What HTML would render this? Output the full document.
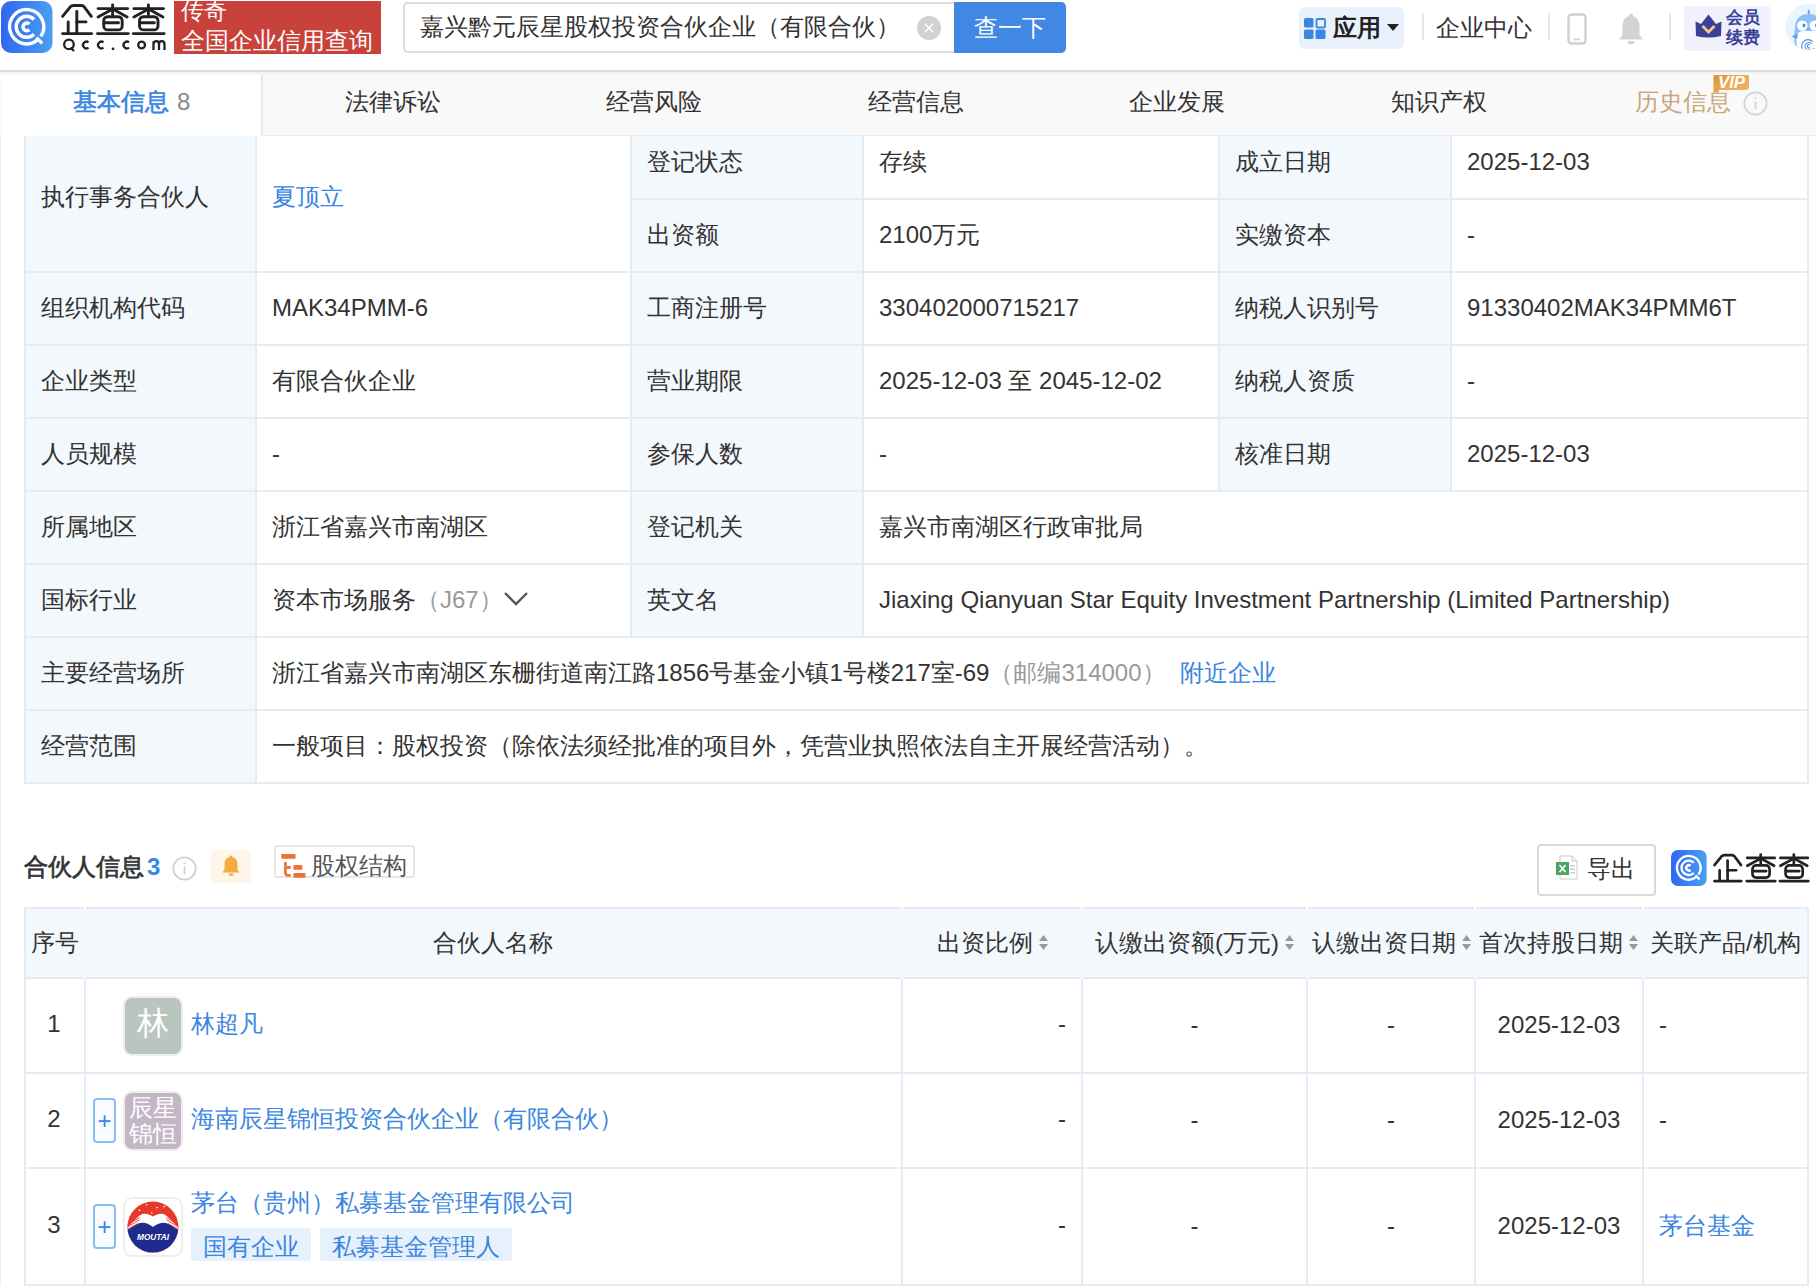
<!DOCTYPE html>
<html><head><meta charset="utf-8"><title>企查查</title><style>
*{box-sizing:border-box;margin:0;padding:0}
html,body{width:1816px;height:1286px;overflow:hidden;background:#fff;font-family:"Liberation Sans", sans-serif;color:#333}
.a{position:absolute}
.c{position:absolute;display:flex;align-items:center;padding-left:15px;padding-bottom:2px;font-size:24px;white-space:nowrap}
.lb{background:#f3f8fd}
.hl{position:absolute;height:2px;background:#e3ebf5}
.vl{position:absolute;width:2px;background:#e3ebf5}
.lk{color:#3a86e0}
.gr{color:#999}
</style></head>
<body>
<div class="a" style="left:0;top:70px;width:1px;height:1216px;background:#eeeeee"></div>
<div class="c lb" style="left:26px;top:127px;width:229px;height:144px;padding-bottom:5px">执行事务合伙人</div>
<div class="c" style="left:257px;top:127px;width:373px;height:144px;padding-bottom:5px"><span class="lk">夏顶立</span></div>
<div class="c lb" style="left:632px;top:127px;width:230px;height:71px;">登记状态</div>
<div class="c" style="left:864px;top:127px;width:354px;height:71px;">存续</div>
<div class="c lb" style="left:1220px;top:127px;width:230px;height:71px;">成立日期</div>
<div class="c" style="left:1452px;top:127px;width:355px;height:71px;">2025-12-03</div>
<div class="c lb" style="left:632px;top:200px;width:230px;height:71px;">出资额</div>
<div class="c" style="left:864px;top:200px;width:354px;height:71px;">2100万元</div>
<div class="c lb" style="left:1220px;top:200px;width:230px;height:71px;">实缴资本</div>
<div class="c" style="left:1452px;top:200px;width:355px;height:71px;">-</div>
<div class="c lb" style="left:26px;top:273px;width:229px;height:71px;">组织机构代码</div>
<div class="c" style="left:257px;top:273px;width:373px;height:71px;">MAK34PMM-6</div>
<div class="c lb" style="left:632px;top:273px;width:230px;height:71px;">工商注册号</div>
<div class="c" style="left:864px;top:273px;width:354px;height:71px;">330402000715217</div>
<div class="c lb" style="left:1220px;top:273px;width:230px;height:71px;">纳税人识别号</div>
<div class="c" style="left:1452px;top:273px;width:355px;height:71px;">91330402MAK34PMM6T</div>
<div class="c lb" style="left:26px;top:346px;width:229px;height:71px;">企业类型</div>
<div class="c" style="left:257px;top:346px;width:373px;height:71px;">有限合伙企业</div>
<div class="c lb" style="left:632px;top:346px;width:230px;height:71px;">营业期限</div>
<div class="c" style="left:864px;top:346px;width:354px;height:71px;">2025-12-03 至 2045-12-02</div>
<div class="c lb" style="left:1220px;top:346px;width:230px;height:71px;">纳税人资质</div>
<div class="c" style="left:1452px;top:346px;width:355px;height:71px;">-</div>
<div class="c lb" style="left:26px;top:419px;width:229px;height:71px;">人员规模</div>
<div class="c" style="left:257px;top:419px;width:373px;height:71px;">-</div>
<div class="c lb" style="left:632px;top:419px;width:230px;height:71px;">参保人数</div>
<div class="c" style="left:864px;top:419px;width:354px;height:71px;">-</div>
<div class="c lb" style="left:1220px;top:419px;width:230px;height:71px;">核准日期</div>
<div class="c" style="left:1452px;top:419px;width:355px;height:71px;">2025-12-03</div>
<div class="c lb" style="left:26px;top:492px;width:229px;height:71px;">所属地区</div>
<div class="c" style="left:257px;top:492px;width:373px;height:71px;">浙江省嘉兴市南湖区</div>
<div class="c lb" style="left:632px;top:492px;width:230px;height:71px;">登记机关</div>
<div class="c" style="left:864px;top:492px;width:943px;height:71px;">嘉兴市南湖区行政审批局</div>
<div class="c lb" style="left:26px;top:565px;width:229px;height:71px;">国标行业</div>
<div class="c" style="left:257px;top:565px;width:373px;height:71px;">资本市场服务<span class="gr">（J67）</span><svg class="a" style="left:246px;top:26px" width="26" height="16" viewBox="0 0 26 16"><path d="M2 2 L13 13 L24 2" fill="none" stroke="#555" stroke-width="2.4"/></svg></div>
<div class="c lb" style="left:632px;top:565px;width:230px;height:71px;">英文名</div>
<div class="c" style="left:864px;top:565px;width:943px;height:71px;">Jiaxing Qianyuan Star Equity Investment Partnership (Limited Partnership)</div>
<div class="c lb" style="left:26px;top:638px;width:229px;height:71px;">主要经营场所</div>
<div class="c" style="left:257px;top:638px;width:1550px;height:71px;">浙江省嘉兴市南湖区东栅街道南江路1856号基金小镇1号楼217室-69<span class="gr">（邮编314000）</span><span class="lk" style="margin-left:14px">附近企业</span></div>
<div class="c lb" style="left:26px;top:711px;width:229px;height:71px;">经营范围</div>
<div class="c" style="left:257px;top:711px;width:1550px;height:71px;">一般项目：股权投资（除依法须经批准的项目外，凭营业执照依法自主开展经营活动）。</div>
<div class="hl" style="left:630px;top:198px;width:1179px"></div>
<div class="hl" style="left:24px;top:271px;width:1785px"></div>
<div class="hl" style="left:24px;top:344px;width:1785px"></div>
<div class="hl" style="left:24px;top:417px;width:1785px"></div>
<div class="hl" style="left:24px;top:490px;width:1785px"></div>
<div class="hl" style="left:24px;top:563px;width:1785px"></div>
<div class="hl" style="left:24px;top:636px;width:1785px"></div>
<div class="hl" style="left:24px;top:709px;width:1785px"></div>
<div class="hl" style="left:24px;top:782px;width:1785px"></div>
<div class="vl" style="left:24px;top:125px;height:659px"></div>
<div class="vl" style="left:1807px;top:125px;height:659px"></div>
<div class="vl" style="left:255px;top:125px;height:659px"></div>
<div class="vl" style="left:630px;top:125px;height:513px"></div>
<div class="vl" style="left:862px;top:125px;height:513px"></div>
<div class="vl" style="left:1218px;top:125px;height:367px"></div>
<div class="vl" style="left:1450px;top:125px;height:367px"></div>

<div class="a" style="left:24px;top:849px;font-size:24px;font-weight:normal;-webkit-text-stroke:0.7px #333;line-height:36px;color:#333">合伙人信息<span style="color:#3a86e0;-webkit-text-stroke:0;margin-left:3px;font-weight:bold">3</span></div>
<svg class="a" style="left:172px;top:856px" width="25" height="25" viewBox="0 0 25 25"><circle cx="12.5" cy="12.5" r="11.2" fill="none" stroke="#d2d2d2" stroke-width="1.8"/><rect x="11.6" y="10.5" width="1.8" height="8" fill="#d2d2d2"/><circle cx="12.5" cy="7.3" r="1.1" fill="#d2d2d2"/></svg>
<div class="a" style="left:211px;top:850px;width:40px;height:33px;background:#fff6e9;border-radius:3px"></div>
<svg class="a" style="left:220px;top:855px" width="22" height="22" viewBox="0 0 22 22"><path d="M11 2 C6.5 2 4.5 5.5 4.5 9 L4.5 14.5 L2.5 17.5 L19.5 17.5 L17.5 14.5 L17.5 9 C17.5 5.5 15.5 2 11 2Z" fill="#f2ad3c"/><circle cx="11" cy="1.8" r="1.4" fill="#f2ad3c"/><path d="M8.5 18.5 A2.5 2.5 0 0 0 13.5 18.5Z" fill="#f2ad3c"/></svg>
<div class="a" style="left:274px;top:845px;width:141px;height:33px;border:2px solid #e6e6e6;border-radius:3px"></div>
<svg class="a" style="left:276px;top:848px" width="36" height="34" viewBox="0 0 36 34"><g fill="#ec7238"><rect x="5.3" y="5.9" width="14.3" height="4.9" rx="1"/><rect x="10.8" y="18" width="4" height="2.9"/><rect x="17.4" y="17" width="9" height="4.8" rx="1"/><rect x="17.4" y="25.1" width="12.1" height="4.6" rx="1"/></g><path d="M9.45 13.9 V24.5 Q9.45 27.35 12.3 27.35 H14.8" fill="none" stroke="#ec7238" stroke-width="2.7"/></svg>
<div class="a" style="left:311px;top:848px;font-size:24px;line-height:36px;color:#555">股权结构</div>

<div class="a" style="left:1537px;top:844px;width:119px;height:52px;border:2px solid #d9d9d9;border-radius:4px;background:#fff"></div>
<svg class="a" style="left:1555px;top:855px" width="24" height="26" viewBox="0 0 24 26"><path d="M5 1 L17 1 L22 6 L22 24 L5 24Z" fill="#fff" stroke="#c8c8c8" stroke-width="1"/><path d="M17 1 L17 6 L22 6" fill="none" stroke="#c8c8c8" stroke-width="1"/><rect x="15" y="10" width="5" height="1.5" fill="#ccc"/><rect x="15" y="13.5" width="5" height="1.5" fill="#ccc"/><rect x="15" y="17" width="5" height="1.5" fill="#ccc"/><rect x="1" y="7" width="13" height="13" fill="#4aa564"/><path d="M4.5 10 L10.5 17 M10.5 10 L4.5 17" stroke="#fff" stroke-width="1.8"/></svg>
<div class="a" style="left:1587px;top:851px;font-size:24px;line-height:36px;color:#333">导出</div>

<svg class="a" style="left:1671px;top:850px" width="36" height="36" viewBox="1 1 52 52"><defs><linearGradient id="lg1671" x1="0" y1="0" x2="1" y2="0"><stop offset="0" stop-color="#2f66f4"/><stop offset="1" stop-color="#49a0f1"/></linearGradient></defs>
<rect x="1" y="1" width="51.5" height="52" rx="10" fill="url(#lg1671)"/>
<g fill="none" stroke="#fff" stroke-linecap="butt">
<path d="M37.6 39.9 A17.1 17.1 0 1 1 40.8 36.4" stroke-width="3.4"/>
<path d="M36.4 37.6 L42.2 43.4" stroke-width="3.4"/>
<path d="M34 34.2 A10.45 10.45 0 1 1 34 19.4" stroke-width="3.5"/>
<path d="M29.4 29.6 A3.8 3.8 0 1 1 29.4 24" stroke-width="3.6"/>
</g></svg>
<svg class="a" style="left:1710px;top:850px" width="104" height="37" viewBox="0 0 112 40"><g fill="none" stroke="#222" stroke-width="2.9" stroke-linecap="round" stroke-linejoin="round">
<path d="M4.6 16.3 L12.3 6.8 Q13.6 5.5 15.5 5.5 L23.5 5.5 Q25.2 5.5 26.2 6.8 L33.3 16.3"/><path d="M18.8 11.4 V32.4"/><path d="M18.8 21.9 H28"/><path d="M10.2 21.9 V32.4"/><path d="M4.6 33.6 H33.6"/>
<path d="M40.1 8.6 H69.7"/><path d="M54.6 4.9 V14.8"/><path d="M54.3 9.3 L40.1 17"/><path d="M55.2 9.3 L69.1 17"/><rect x="45.7" y="16.7" width="18.5" height="13.2" rx="4"/><path d="M46.3 22.8 H60.5"/><path d="M39.5 33.6 H70.3"/>
<path d="M75.9 8.6 H105.5"/><path d="M90.4 4.9 V14.8"/><path d="M90.1 9.3 L75.9 17"/><path d="M91 9.3 L104.9 17"/><rect x="81.5" y="16.7" width="18.5" height="13.2" rx="4"/><path d="M82.1 22.8 H96.3"/><path d="M75.3 33.6 H106.1"/>
</g></svg>
<div class="a lb" style="left:24px;top:907px;width:1785px;height:70px"></div>
<div class="a" style="left:31px;top:925px;font-size:24px;line-height:36px;white-space:nowrap">序号</div>
<div class="a" style="left:433px;top:925px;font-size:24px;line-height:36px;white-space:nowrap">合伙人名称</div>
<div class="a" style="left:937px;top:925px;font-size:24px;line-height:36px;white-space:nowrap">出资比例</div>
<svg class="a" style="left:1039px;top:935px" width="9" height="15" viewBox="0 0 9 15"><path d="M0 6 L4.5 0 L9 6Z M0 9 L4.5 15 L9 9Z" fill="#999"/></svg>
<div class="a" style="left:1095px;top:925px;font-size:24px;line-height:36px;white-space:nowrap">认缴出资额(万元)</div>
<svg class="a" style="left:1285px;top:935px" width="9" height="15" viewBox="0 0 9 15"><path d="M0 6 L4.5 0 L9 6Z M0 9 L4.5 15 L9 9Z" fill="#999"/></svg>
<div class="a" style="left:1312px;top:925px;font-size:24px;line-height:36px;white-space:nowrap">认缴出资日期</div>
<svg class="a" style="left:1462px;top:935px" width="9" height="15" viewBox="0 0 9 15"><path d="M0 6 L4.5 0 L9 6Z M0 9 L4.5 15 L9 9Z" fill="#999"/></svg>
<div class="a" style="left:1479px;top:925px;font-size:24px;line-height:36px;white-space:nowrap">首次持股日期</div>
<svg class="a" style="left:1629px;top:935px" width="9" height="15" viewBox="0 0 9 15"><path d="M0 6 L4.5 0 L9 6Z M0 9 L4.5 15 L9 9Z" fill="#999"/></svg>
<div class="a" style="left:1650px;top:925px;font-size:24px;line-height:36px;white-space:nowrap">关联产品/机构</div>
<div class="c" style="left:26px;top:979px;width:58px;height:93px;justify-content:center;padding-left:0px;padding-right:0px;padding-right:2px;padding-bottom:4px">1</div>
<div class="c" style="left:903px;top:979px;width:178px;height:93px;justify-content:flex-end;padding-left:0px;padding-right:15px;padding-bottom:4px">-</div>
<div class="c" style="left:1083px;top:979px;width:223px;height:93px;justify-content:center;padding-left:0px;padding-right:0px;">-</div>
<div class="c" style="left:1308px;top:979px;width:166px;height:93px;justify-content:center;padding-left:0px;padding-right:0px;">-</div>
<div class="c" style="left:1476px;top:979px;width:166px;height:93px;justify-content:center;padding-left:0px;padding-right:0px;">2025-12-03</div>
<div class="c" style="left:1644px;top:979px;width:163px;height:93px;justify-content:flex-start;padding-left:15px;padding-right:0px;">-</div>
<div class="c" style="left:26px;top:1074px;width:58px;height:93px;justify-content:center;padding-left:0px;padding-right:0px;padding-right:2px;padding-bottom:4px">2</div>
<div class="c" style="left:903px;top:1074px;width:178px;height:93px;justify-content:flex-end;padding-left:0px;padding-right:15px;padding-bottom:4px">-</div>
<div class="c" style="left:1083px;top:1074px;width:223px;height:93px;justify-content:center;padding-left:0px;padding-right:0px;">-</div>
<div class="c" style="left:1308px;top:1074px;width:166px;height:93px;justify-content:center;padding-left:0px;padding-right:0px;">-</div>
<div class="c" style="left:1476px;top:1074px;width:166px;height:93px;justify-content:center;padding-left:0px;padding-right:0px;">2025-12-03</div>
<div class="c" style="left:1644px;top:1074px;width:163px;height:93px;justify-content:flex-start;padding-left:15px;padding-right:0px;">-</div>
<div class="c" style="left:26px;top:1169px;width:58px;height:115px;justify-content:center;padding-left:0px;padding-right:0px;padding-right:2px;padding-bottom:4px">3</div>
<div class="c" style="left:903px;top:1169px;width:178px;height:115px;justify-content:flex-end;padding-left:0px;padding-right:15px;padding-bottom:4px">-</div>
<div class="c" style="left:1083px;top:1169px;width:223px;height:115px;justify-content:center;padding-left:0px;padding-right:0px;">-</div>
<div class="c" style="left:1308px;top:1169px;width:166px;height:115px;justify-content:center;padding-left:0px;padding-right:0px;">-</div>
<div class="c" style="left:1476px;top:1169px;width:166px;height:115px;justify-content:center;padding-left:0px;padding-right:0px;">2025-12-03</div>
<div class="c" style="left:1644px;top:1169px;width:163px;height:115px;justify-content:flex-start;padding-left:15px;padding-right:0px;"><span class="lk">茅台基金</span></div>
<div class="a" style="left:123px;top:996px;width:60px;height:60px;border:2px solid #eee;border-radius:9px;background:#b9c6bf;color:#fff;font-size:32px;padding-bottom:4px;display:flex;align-items:center;justify-content:center">林</div>
<div class="a lk" style="left:191px;top:1006px;font-size:24px;line-height:36px">林超凡</div>
<div class="a" style="left:93px;top:1098px;width:23px;height:45px;border:2px solid #8bbcf2;border-radius:4px;background:#f8fbff;color:#3a86e0;font-size:24px;display:flex;align-items:center;justify-content:center;line-height:1">+</div>
<div class="a" style="left:123px;top:1091px;width:60px;height:60px;border:2px solid #eee;border-radius:9px;background:#c4b6c6;color:#fff;font-size:24px;line-height:26px;display:flex;align-items:center;justify-content:center;text-align:center">辰星<br>锦恒</div>
<div class="a lk" style="left:191px;top:1101px;font-size:24px;line-height:36px">海南辰星锦恒投资合伙企业（有限合伙）</div>
<div class="a" style="left:93px;top:1204px;width:23px;height:45px;border:2px solid #8bbcf2;border-radius:4px;background:#f8fbff;color:#3a86e0;font-size:24px;display:flex;align-items:center;justify-content:center;line-height:1">+</div>
<div class="a" style="left:123px;top:1197px;width:60px;height:60px;border:2px solid #eee;border-radius:9px;background:#fff;display:flex;align-items:center;justify-content:center"><svg width="56" height="56" viewBox="2 2 56 56"><defs><clipPath id="mc"><circle cx="29.9" cy="30.1" r="25.5"/></clipPath></defs>
<g clip-path="url(#mc)"><rect x="0" y="0" width="60" height="60" fill="#e7382b"/>
<path d="M0 31 L4.7 30.4 C10 25 15 19 19.1 17 C24 16 27 18 29.9 19.6 C33 18 36 16 40.6 17 C45 19 50 25 55 30.4 L60 31 L60 60 L0 60 Z" fill="#fff"/>
<g stroke="#e7382b" stroke-width="0.9" fill="none"><path d="M2 29 L17 20.5"/><path d="M2 31.3 L16.5 23"/><path d="M2 33.6 L15 26.5"/><path d="M58 29 L43 20.5"/><path d="M58 31.3 L43.5 23"/><path d="M58 33.6 L45 26.5"/></g>
<path d="M0 33.5 L4.2 32.9 C10 30 14 26 19.1 25.7 C24 25.5 27 28 29.9 29.9 C33 28 36 25.5 40.6 25.7 C46 26 50 30 55.5 32.9 L60 33.5 L60 60 L0 60Z" fill="#1e2a8e"/>
<g fill="#fff"><circle cx="23.7" cy="7.8" r="0.8"/><circle cx="16.5" cy="13.4" r="0.8"/><circle cx="28.8" cy="16" r="0.8"/><circle cx="34" cy="10.6" r="0.8"/><circle cx="41.1" cy="9.6" r="0.8"/></g>
</g><text x="30" y="42.6" font-size="8.3" font-weight="bold" font-style="italic" font-family="Liberation Sans" fill="#fff" text-anchor="middle" textLength="32" lengthAdjust="spacingAndGlyphs">MOUTAI</text></svg></div>
<div class="a lk" style="left:191px;top:1185px;font-size:24px;line-height:36px">茅台（贵州）私募基金管理有限公司</div>
<div class="a lk" style="left:191px;top:1228px;width:120px;height:33px;background:#e7f1fc;border-radius:3px;font-size:24px;line-height:38px;padding-left:12px">国有企业</div>
<div class="a lk" style="left:320px;top:1228px;width:192px;height:33px;background:#e7f1fc;border-radius:3px;font-size:24px;line-height:38px;padding-left:12px;overflow:hidden">私募基金管理人</div>
<div class="hl" style="left:24px;top:907px;width:1785px"></div>
<div class="hl" style="left:24px;top:977px;width:1785px"></div>
<div class="hl" style="left:24px;top:1072px;width:1785px"></div>
<div class="hl" style="left:24px;top:1167px;width:1785px"></div>
<div class="hl" style="left:24px;top:1284px;width:1785px"></div>
<div class="vl" style="left:24px;top:907px;height:379px"></div>
<div class="vl" style="left:1807px;top:907px;height:379px"></div>
<div class="vl" style="left:84px;top:977px;height:309px"></div>
<div class="a" style="left:84px;top:907px;width:2px;height:2px;background:#fff"></div>
<div class="a" style="left:84px;top:977px;width:2px;height:2px;background:#fff"></div>
<div class="vl" style="left:901px;top:977px;height:309px"></div>
<div class="a" style="left:901px;top:907px;width:2px;height:2px;background:#fff"></div>
<div class="a" style="left:901px;top:977px;width:2px;height:2px;background:#fff"></div>
<div class="vl" style="left:1081px;top:977px;height:309px"></div>
<div class="a" style="left:1081px;top:907px;width:2px;height:2px;background:#fff"></div>
<div class="a" style="left:1081px;top:977px;width:2px;height:2px;background:#fff"></div>
<div class="vl" style="left:1306px;top:977px;height:309px"></div>
<div class="a" style="left:1306px;top:907px;width:2px;height:2px;background:#fff"></div>
<div class="a" style="left:1306px;top:977px;width:2px;height:2px;background:#fff"></div>
<div class="vl" style="left:1474px;top:977px;height:309px"></div>
<div class="a" style="left:1474px;top:907px;width:2px;height:2px;background:#fff"></div>
<div class="a" style="left:1474px;top:977px;width:2px;height:2px;background:#fff"></div>
<div class="vl" style="left:1642px;top:977px;height:309px"></div>
<div class="a" style="left:1642px;top:907px;width:2px;height:2px;background:#fff"></div>
<div class="a" style="left:1642px;top:977px;width:2px;height:2px;background:#fff"></div>

<div class="a" style="left:0;top:71px;width:1816px;height:65px;background:#f9f9f9"></div>
<div class="a" style="left:0;top:135px;width:1816px;height:1px;background:#eaeaea"></div>
<div class="a" style="left:1px;top:71px;width:260px;height:65px;background:#fff;border-radius:6px 0 0 0"></div>
<div class="a" style="left:261px;top:71px;width:2px;height:64px;background:#e8e8e8"></div>
<div class="a" style="left:73px;top:84px;font-size:24px;-webkit-text-stroke:0.6px #3a86e0;line-height:36px;color:#3a86e0">基本信息<span style="-webkit-text-stroke:0;color:#888;margin-left:8px">8</span></div>
<div class="a" style="left:345px;top:84px;font-size:24px;line-height:36px;color:#333">法律诉讼</div>
<div class="a" style="left:606px;top:84px;font-size:24px;line-height:36px;color:#333">经营风险</div>
<div class="a" style="left:868px;top:84px;font-size:24px;line-height:36px;color:#333">经营信息</div>
<div class="a" style="left:1129px;top:84px;font-size:24px;line-height:36px;color:#333">企业发展</div>
<div class="a" style="left:1391px;top:84px;font-size:24px;line-height:36px;color:#333">知识产权</div>
<div class="a" style="left:1635px;top:84px;font-size:24px;line-height:36px;color:#c9a67c">历史信息</div>
<svg class="a" style="left:1712px;top:73px" width="38" height="20" viewBox="0 0 38 20"><defs><linearGradient id="vg" x1="0" y1="0" x2="1" y2="0.6"><stop offset="0" stop-color="#dc8f2c"/><stop offset="0.5" stop-color="#e9a84e"/><stop offset="1" stop-color="#eab265"/></linearGradient></defs><path d="M4 1 L34 1 Q37 1 37 4 L37 14 Q37 17 34 17 L8 17 L1.5 20 L1.5 4 Q1.5 1 4 1Z" fill="url(#vg)"/><text x="19.5" y="14.6" font-family="Liberation Sans" font-style="italic" font-weight="bold" font-size="16" fill="#fff" text-anchor="middle" textLength="27" lengthAdjust="spacingAndGlyphs">VIP</text></svg>
<svg class="a" style="left:1743px;top:91px" width="25" height="25" viewBox="0 0 25 25"><circle cx="12.5" cy="12.5" r="11.2" fill="none" stroke="#d5d5d5" stroke-width="1.8"/><rect x="11.6" y="10.5" width="1.8" height="8" fill="#d5d5d5"/><circle cx="12.5" cy="7.3" r="1.1" fill="#d5d5d5"/></svg>


<div class="a" style="left:0;top:0;width:1816px;height:70px;background:#fff"></div>
<svg class="a" style="left:1px;top:1px" width="52" height="52" viewBox="1 1 52 52"><defs><linearGradient id="lg1" x1="0" y1="0" x2="1" y2="0"><stop offset="0" stop-color="#2f66f4"/><stop offset="1" stop-color="#49a0f1"/></linearGradient></defs>
<rect x="1" y="1" width="51.5" height="52" rx="10" fill="url(#lg1)"/>
<g fill="none" stroke="#fff" stroke-linecap="butt">
<path d="M37.6 39.9 A17.1 17.1 0 1 1 40.8 36.4" stroke-width="3.4"/>
<path d="M36.4 37.6 L42.2 43.4" stroke-width="3.4"/>
<path d="M34 34.2 A10.45 10.45 0 1 1 34 19.4" stroke-width="3.5"/>
<path d="M29.4 29.6 A3.8 3.8 0 1 1 29.4 24" stroke-width="3.6"/>
</g></svg>
<svg class="a" style="left:58px;top:0px" width="112" height="40" viewBox="0 0 112 40"><g fill="none" stroke="#222" stroke-width="2.9" stroke-linecap="round" stroke-linejoin="round">
<path d="M4.6 16.3 L12.3 6.8 Q13.6 5.5 15.5 5.5 L23.5 5.5 Q25.2 5.5 26.2 6.8 L33.3 16.3"/><path d="M18.8 11.4 V32.4"/><path d="M18.8 21.9 H28"/><path d="M10.2 21.9 V32.4"/><path d="M4.6 33.6 H33.6"/>
<path d="M40.1 8.6 H69.7"/><path d="M54.6 4.9 V14.8"/><path d="M54.3 9.3 L40.1 17"/><path d="M55.2 9.3 L69.1 17"/><rect x="45.7" y="16.7" width="18.5" height="13.2" rx="4"/><path d="M46.3 22.8 H60.5"/><path d="M39.5 33.6 H70.3"/>
<path d="M75.9 8.6 H105.5"/><path d="M90.4 4.9 V14.8"/><path d="M90.1 9.3 L75.9 17"/><path d="M91 9.3 L104.9 17"/><rect x="81.5" y="16.7" width="18.5" height="13.2" rx="4"/><path d="M82.1 22.8 H96.3"/><path d="M75.3 33.6 H106.1"/>
</g></svg>
<svg class="a" style="left:58px;top:36px" width="112" height="17" viewBox="0 0 112 17"><g fill="none" stroke="#222" stroke-width="2.3">
<circle cx="10.95" cy="8.4" r="4.8"/><path d="M12.5 11.5 L16 15"/>
<path d="M30.5 6.3 A3.4 3.4 0 1 0 30.5 11.7"/>
<path d="M45.5 6.3 A3.4 3.4 0 1 0 45.5 11.7"/>
<path d="M71 6.3 A3.4 3.4 0 1 0 71 11.7"/>
<circle cx="83.6" cy="9" r="3.4"/>
<path d="M95.5 14 V5.2 M95.5 8.5 Q95.5 5.2 98.5 5.2 Q101 5.2 101 8.5 V14 M101 8.5 Q101 5.2 103.8 5.2 Q106.5 5.2 106.5 8.5 V14"/>
</g><circle cx="55" cy="12.8" r="1.4" fill="#222"/></svg>
<div class="a" style="left:174px;top:1px;width:207px;height:53px;background:#c8413b;overflow:hidden">
  <div class="a" style="left:7px;top:-4px;font-size:23px;line-height:28px;color:#fff">传奇</div>
  <div class="a" style="left:7px;top:25.5px;font-size:23.6px;line-height:28px;color:#fff;letter-spacing:0px">全国企业信用查询</div>
</div>
<div class="a" style="left:403px;top:2px;width:560px;height:51px;border:2px solid #dcdcdc;border-right:none;border-radius:5px 0 0 5px;background:#fff"></div>
<div class="a" style="left:420px;top:9px;font-size:24px;line-height:36px;color:#333">嘉兴黔元辰星股权投资合伙企业（有限合伙）</div>
<div class="a" style="left:917px;top:16px;width:24px;height:24px;border-radius:50%;background:#d2d2d2"></div>
<svg class="a" style="left:917px;top:16px" width="24" height="24" viewBox="0 0 24 24"><path d="M7.8 7.8 L16.2 16.2 M16.2 7.8 L7.8 16.2" stroke="#fff" stroke-width="1.5"/></svg>
<div class="a" style="left:954px;top:2px;width:112px;height:51px;background:#4088e3;border-radius:0 5px 5px 0;color:#fff;font-size:24px;display:flex;align-items:center;justify-content:center">查一下</div>

<div class="a" style="left:1299px;top:7px;width:105px;height:42px;background:#e9f1fd;border-radius:6px"></div>
<svg class="a" style="left:1304px;top:18px" width="22" height="21" viewBox="0 0 22 21"><rect x="0" y="0" width="9.5" height="9.5" rx="1.5" fill="#3a86e0"/><rect x="12.5" y="1" width="8.5" height="8.5" rx="1" fill="none" stroke="#3a86e0" stroke-width="1.8"/><rect x="0" y="11.5" width="9.5" height="9.5" rx="1.5" fill="#3a86e0"/><rect x="11.5" y="11.5" width="10" height="9.5" rx="1.5" fill="#3a86e0"/></svg>
<div class="a" style="left:1333px;top:10px;font-size:24px;font-weight:bold;line-height:36px;color:#222">应用</div>
<svg class="a" style="left:1386px;top:24px" width="14" height="8" viewBox="0 0 14 8"><path d="M1 0 L13 0 L7 7Z" fill="#222"/></svg>
<div class="a" style="left:1422px;top:13px;width:2px;height:27px;background:#e6e6e6"></div>
<div class="a" style="left:1436px;top:10px;font-size:24px;line-height:36px;color:#333">企业中心</div>
<div class="a" style="left:1548px;top:13px;width:2px;height:27px;background:#e6e6e6"></div>
<svg class="a" style="left:1567px;top:13px" width="20" height="32" viewBox="0 0 20 32"><rect x="1.5" y="1.5" width="17" height="29" rx="3" fill="none" stroke="#d0d0d0" stroke-width="2.4"/><rect x="7" y="25.5" width="6" height="1.8" fill="#d0d0d0"/></svg>
<svg class="a" style="left:1618px;top:13px" width="26" height="32" viewBox="0 0 26 32"><circle cx="13" cy="2.5" r="2" fill="#d3d3d3"/><path d="M13 3 C7 3 4.5 8 4.5 13 L4.5 22 L1 26.5 L25 26.5 L21.5 22 L21.5 13 C21.5 8 19 3 13 3Z" fill="#d3d3d3"/><path d="M9.5 28 L16.5 28 A3.5 3.5 0 0 1 9.5 28Z" fill="#d3d3d3"/></svg>
<div class="a" style="left:1669px;top:13px;width:2px;height:27px;background:#e6e6e6"></div>
<div class="a" style="left:1684px;top:6px;width:87px;height:45px;background:#f0f1fd;border-radius:4px"></div>
<svg class="a" style="left:1695px;top:14px" width="27" height="24" viewBox="0 0 27 24"><path d="M0.5 7.5 L6 10 L13.5 0.5 L21 10 L26.5 7.5 L26 22 Q13.5 25 1 22Z" fill="#3b3f96"/><path d="M7.5 12 L13.5 18 L19.5 12" fill="none" stroke="#f1c88a" stroke-width="2.8"/></svg>
<div class="a" style="left:1726px;top:8px;font-size:16.5px;font-weight:bold;line-height:19.5px;color:#3b3f96">会员<br>续费</div>
<svg class="a" style="left:1786px;top:4px" width="30" height="47" viewBox="0 0 30 47"><defs><clipPath id="avc"><circle cx="22.5" cy="23" r="22.4"/></clipPath></defs>
<circle cx="22.5" cy="23" r="22.4" fill="#ebf4fd" stroke="#e3eefb" stroke-width="0.8"/>
<g clip-path="url(#avc)">
<path d="M9 24 C9 14 15 10 22.5 10 C30 10 36 14 36 24 L36 47 L10 47 C8 40 8 30 9 24Z" fill="#8dc0f6"/>
<path d="M21.5 8 L22.8 5 L24 8.5 C24.5 10.5 21 10.5 21.5 8Z" fill="#5d9ff0"/>
<circle cx="16.3" cy="21.6" r="5.2" fill="#fff"/><circle cx="28.7" cy="21.6" r="5.2" fill="#fff"/>
<path d="M11 30 C14 26 20 27 22.5 27 C25 27 31 26 34 30 L36 47 L13 47 C10 42 10 35 11 30Z" fill="#fff"/>
<path d="M5.5 32.5 L12 29.5 L11 35 Z" fill="#5d9ff0"/>
<ellipse cx="18" cy="21.5" rx="1.5" ry="2.1" fill="#4a8ff0"/><ellipse cx="30.5" cy="21.5" rx="1.5" ry="2.1" fill="#4a8ff0"/>
<path d="M20.5 24.5 Q22.5 27 24.5 24.5Z" fill="#5d9ff0"/>
<path d="M26.5 37.5 A6.3 6.3 0 1 0 28 44" fill="none" stroke="#4a8ff0" stroke-width="1.1"/>
<path d="M25.5 39.5 A3.8 3.8 0 1 0 25.5 45" fill="none" stroke="#4a8ff0" stroke-width="1.1"/>
<path d="M23.8 41 A1.6 1.6 0 1 0 23.8 43.5" fill="none" stroke="#4a8ff0" stroke-width="1.1"/>
</g></svg>
<div class="a" style="left:0;top:70px;width:1816px;height:2px;background:#dedede"></div>
<div class="a" style="left:0;top:72px;width:1816px;height:3px;background:linear-gradient(#f1f1f1,#f9f9f9)"></div>

</body></html>
